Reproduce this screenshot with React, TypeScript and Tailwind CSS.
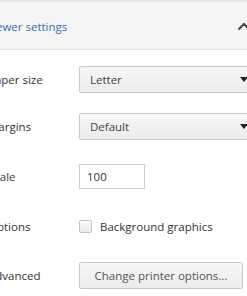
const Row = ({ label, children }: { label: string; children: React.ReactNode }) => (
  <div className="flex items-center h-[47px]">
    <div className="w-[91px] shrink-0 text-[#333]">{label}</div>
    {children}
  </div>
);

const Select = ({ value }: { value: string }) => (
  <div className="relative h-[27px] w-[184px] shrink-0 rounded-[2px] border border-[#c9c9c9] bg-gradient-to-b from-[#f7f7f7] to-[#ececec] pl-[10px] leading-[25px] text-[#444]">
    {value}
    <span className="absolute right-[14px] top-[10px] h-0 w-0 border-x-[4px] border-t-[5px] border-x-transparent border-t-[#222]" />
  </div>
);

export default function App() {
  return (
    <div className="h-[296px] w-[247px] overflow-hidden bg-white text-[11.5px]" style={{ fontFamily: '"Open Sans", "Noto Sans", sans-serif' }}>
      <div className="h-[2px] bg-[#e6e6e6]" />
      <div className="flex h-[48px] items-center justify-between border-b border-[#e2e2e2] bg-[#f5f5f5] pt-[2px] ml-[-10px] mr-[-6px]">
        <span className="text-[#3c6db0]">Fewer settings</span>
        <svg width="14" height="10" viewBox="0 0 14 10" className="mr-[2px]">
          <path d="M1.5 7.5 L7 2 L12.5 7.5" fill="none" stroke="#444" strokeWidth="2" />
        </svg>
      </div>
      <div className="ml-[-12px] pt-[6px]">
        <Row label="Paper size">
          <Select value="Letter" />
        </Row>
        <Row label="Margins">
          <Select value="Default" />
        </Row>
        <div className="h-[3px]" />
        <Row label="Scale">
          <div className="h-[25px] w-[66px] shrink-0 border border-[#cfcfcf] bg-white pl-[7px] leading-[23px] text-[#333]">100</div>
        </Row>
        <div className="h-[3px]" />
        <Row label="Options">
          <div className="flex items-center">
            <span className="h-[13px] w-[13px] rounded-[2px] border border-[#c4c4c4] bg-gradient-to-b from-[#fafafa] to-[#ececec]" />
            <span className="ml-[8px] text-[#333]">Background graphics</span>
          </div>
        </Row>
        <div className="h-[2px]" />
        <Row label="Advanced">
          <div className="h-[27px] w-[164px] shrink-0 rounded-[2px] border border-[#c9c9c9] bg-gradient-to-b from-[#f7f7f7] to-[#ececec] text-center leading-[25px] text-[#555]">
            Change printer options...
          </div>
        </Row>
      </div>
    </div>
  );
}
